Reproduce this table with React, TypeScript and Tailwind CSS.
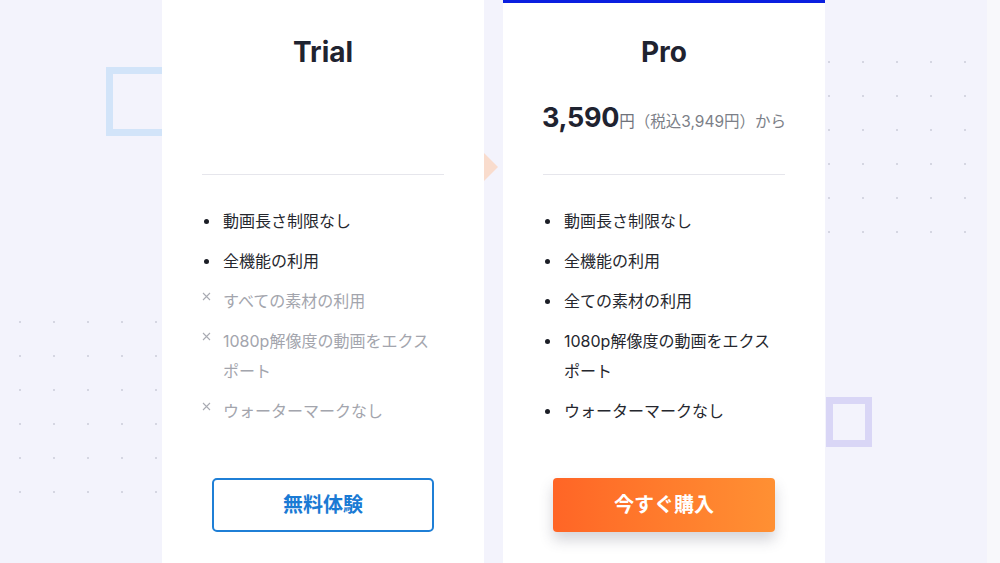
import React from "react";

const font = { fontFamily: '"Inter", "Noto Sans CJK JP", "Noto Sans", sans-serif' };

type Item = { text: string; ok: boolean };

const trialItems: Item[] = [
  { text: "動画長さ制限なし", ok: true },
  { text: "全機能の利用", ok: true },
  { text: "すべての素材の利用", ok: false },
  { text: "1080p解像度の動画をエクスポート", ok: false },
  { text: "ウォーターマークなし", ok: false },
];

const proItems: Item[] = [
  { text: "動画長さ制限なし", ok: true },
  { text: "全機能の利用", ok: true },
  { text: "全ての素材の利用", ok: true },
  { text: "1080p解像度の動画をエクスポート", ok: true },
  { text: "ウォーターマークなし", ok: true },
];

function Dots({ className }: { className: string }) {
  const cells = Array.from({ length: 30 });
  return (
    <div className={`absolute grid grid-cols-5 gap-x-[32px] gap-y-[32px] ${className}`}>
      {cells.map((_, i) => (
        <div key={i} className="h-[2px] w-[2px] rounded-full bg-[#cbccda]" />
      ))}
    </div>
  );
}

function FeatureList({ items }: { items: Item[] }) {
  return (
    <ul className="mt-[31px] flex flex-col gap-[10px]">
      {items.map((it, i) => (
        <li key={i} className="flex items-start">
          <span className="relative flex h-[30px] w-[21px] shrink-0">
            {it.ok ? (
              <span className="absolute left-[2px] top-[12.5px] h-[5px] w-[5px] rounded-full bg-[#1b1e26]" />
            ) : (
              <svg
                className="absolute left-[0px] top-[6px]"
                width="9"
                height="9"
                viewBox="0 0 9 9"
              >
                <path d="M1 1 L8 8 M8 1 L1 8" stroke="#a9abb3" strokeWidth="1.1" />
              </svg>
            )}
          </span>
          <span
            className={`max-w-[214px] text-[16px] leading-[30px] ${
              it.ok ? "text-[#25272e]" : "text-[#a3a5ad]"
            }`}
          >
            {it.text}
          </span>
        </li>
      ))}
    </ul>
  );
}

export default function App() {
  return (
    <div
      className="relative h-[563px] w-[1000px] overflow-hidden bg-[#f3f3fc]"
      style={font}
    >
      {/* right edge strip */}
      <div className="absolute right-0 top-0 h-full w-[13px] bg-[#f8f8fb]" />
      {/* decorations */}
      <div className="absolute left-[106px] top-[67px] h-[69px] w-[80px] border-[7px] border-[#d2e4f9]" />
      <Dots className="left-[19px] top-[321px]" />
      <Dots className="left-[828px] top-[61px]" />
      <div className="absolute left-[826px] top-[397px] h-[50px] w-[46px] border-[7px] border-[#d9d6f6]" />
      <svg className="absolute left-[482px] top-[152px]" width="18" height="30" viewBox="0 0 18 30">
        <path d="M2 1 L16 15 L2 29 Z" fill="#f9dccd" />
      </svg>

      <div className="relative flex h-full gap-[19px] pl-[162px]">
        {/* Trial card */}
        <div className="flex h-[600px] w-[322px] flex-col bg-white px-[40px]">
          <h2 className="mt-[33px] text-center text-[28px] font-bold leading-[38px] text-[#1f2330]">
            Trial
          </h2>
          <div className="mt-[27px] h-[40px]" />
          <div className="mt-[36px] border-t border-[#e6e6ec]" />
          <FeatureList items={trialItems} />
          <button className="mx-auto mt-[52px] flex h-[54px] w-[222px] items-center justify-center rounded-[5px] border-2 border-[#1f7fd6] bg-white text-[20px] font-bold text-[#1a7ad4]">
            無料体験
          </button>
        </div>

        {/* Pro card */}
        <div className="flex h-[600px] w-[322px] flex-col border-t-[3px] border-[#0a1fe0] bg-white px-[40px]">
          <h2 className="mt-[30px] text-center text-[28px] font-bold leading-[38px] text-[#1f2330]">
            Pro
          </h2>
          <div className="mt-[27px] -ml-[1px] flex h-[40px] items-baseline whitespace-nowrap">
            <span className="text-[27px] font-bold leading-[40px] tracking-[-0.3px] text-[#1f2330]">3,590</span>
            <span className="text-[15.5px] text-[#6f727b]">円</span>
            <span className="text-[15.5px] text-[#7c7f88]">（税込3,949円）から</span>
          </div>
          <div className="mt-[36px] border-t border-[#e6e6ec]" />
          <FeatureList items={proItems} />
          <button className="mx-auto mt-[52px] flex h-[54px] w-[222px] items-center justify-center rounded-[4px] bg-gradient-to-r from-[#ff6526] to-[#ff9033] text-[20px] font-bold text-white shadow-[0_8px_14px_rgba(60,60,80,0.22)]">
            今すぐ購入
          </button>
        </div>
      </div>
    </div>
  );
}
